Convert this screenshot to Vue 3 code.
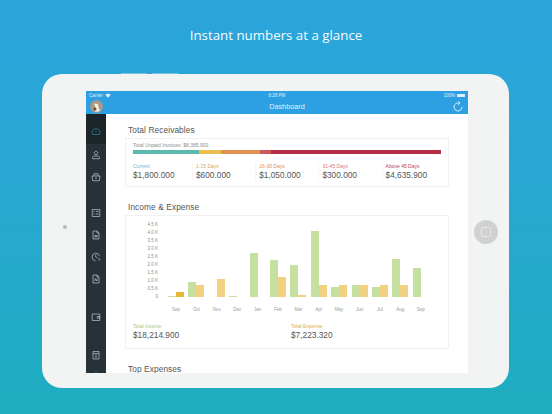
<template>
  <div class="page">
    <h1 class="headline">Instant numbers at a glance</h1>

    <div class="volume-row">
      <span class="volume-btn"></span>
      <span class="volume-btn"></span>
    </div>

    <div class="tablet">
      <div class="bezel-left"><span class="camera"></span></div>

      <div class="screen">
        <header class="appbar">
          <div class="statusbar">
            <span class="status-side">
              Carrier
              <svg width="6" height="5" viewBox="0 0 12 10"><path d="M6 9.5 0.5 3.5C3.5.6 8.5.6 11.500 3.500Z" fill="#fff" /></svg>
            </span>
            <span class="status-time">6:28 PM</span>
            <span class="status-side right">
              100%
              <span class="battery"></span>
            </span>
          </div>
          <div class="navbar">
            <span class="avatar">
              <svg width="13" height="13" viewBox="0 0 13 13">
                <circle cx="6.500" cy="6.500" r="6.500" fill="#a89a84" />
                <path d="M4 3.500 8 4 8.500 7 10 11 5 12 5.500 7.500Z" fill="#f1eee8" />
                <circle cx="5" cy="9" r="1.500" fill="#7a4a3a" />
              </svg>
            </span>
            <span class="nav-title">Dashboard</span>
            <svg class="refresh" width="10" height="11" viewBox="0 0 20 22" fill="none" stroke="#fff" stroke-width="1.800">
              <path d="M12 4.200A8 8 0 1 0 18 12" />
              <path d="M10.500 .8 14 4.200 10.500 7.600" />
            </svg>
          </div>
        </header>

        <div class="body">
          <aside class="sidebar">
            <div v-for="item in navItems" :key="item.id" class="side-item" :class="[item.gap, { active: item.id === 'home' }]">
              <svg width="10" height="10" viewBox="0 0 20 20" fill="none" stroke="currentColor" stroke-width="1.500" stroke-linejoin="round">
                <path v-for="(d, i) in item.paths" :key="i" :d="d" />
              </svg>
            </div>
          </aside>

          <main class="content">
            <h2 class="section-title first">Total Receivables</h2>
            <section class="card receivables">
              <p class="unpaid">Total Unpaid Invoices: $8,385.900</p>
              <div class="aging-bar">
                <span
                  v-for="seg in agingSegments"
                  :key="seg.color"
                  :style="{ width: seg.width + 'px', background: seg.color }"
                ></span>
              </div>
              <div class="aging-row">
                <div v-for="col in agingCols" :key="col.label" class="aging-col">
                  <span class="stat-label" :style="{ color: col.color }">{{ col.label }}</span>
                  <strong class="stat-value">{{ col.value }}</strong>
                </div>
              </div>
            </section>

            <h2 class="section-title second">Income &amp; Expense</h2>
            <section class="card income">
              <div class="chart">
                <div class="y-axis">
                  <span v-for="t in yTicks" :key="t">{{ t }}</span>
                </div>
                <div class="plot">
                  <div class="bars">
                    <div v-for="(m, i) in months" :key="i" class="group">
                      <span class="bar inc" :style="{ height: m.inc + 'px' }"></span>
                      <span class="bar exp" :class="{ strong: i === 0 }" :style="{ height: m.exp + 'px' }"></span>
                    </div>
                  </div>
                  <div class="x-axis">
                    <span v-for="(m, i) in months" :key="i">{{ m.name }}</span>
                  </div>
                </div>
              </div>
              <div class="totals">
                <div class="total">
                  <span class="stat-label income-label">Total Income</span>
                  <strong class="stat-value">$18,214.900</strong>
                </div>
                <div class="total">
                  <span class="stat-label expense-label">Total Expense</span>
                  <strong class="stat-value">$7,223.320</strong>
                </div>
              </div>
            </section>

            <h2 class="section-title last">Top Expenses</h2>
          </main>
        </div>
      </div>

      <div class="bezel-right">
        <span class="home-btn"><span class="home-square"></span></span>
      </div>
    </div>
  </div>
</template>

<script setup>
const navItems = [
  { id: 'home', paths: ['M3 15a8 8 0 1 1 14 0Z', 'M10 7v3'] },
  { id: 'contacts', paths: ['M10 2.500a3.500 3.500 0 1 0 .01 0Z', 'M3 17.500v-2.500c0-2 2-3 4-3h6c2 0 4 1 4 3v2.500Z'] },
  { id: 'items', paths: ['M2 8h16l-1.500 9.500h-13Z', 'M6 8V3.500h8V8', 'M8 12h4'] },
  { id: 'estimates', gap: 'group-start', paths: ['M2.500 3h15v14h-15Z', 'M5.500 7h2', 'M5.500 12h2', 'M10 7h5', 'M10 12h5'] },
  { id: 'invoices', paths: ['M4 2h8l4 4v12H4Z', 'M12 2v4h4', 'M7.500 11h5v3h-5Z'] },
  { id: 'payments', paths: ['M17 8.500A7.500 7.500 0 1 0 9 17.500', 'M9.500 5.500V10l3 2', 'M14 12l3.500 3.500-2 2'] },
  { id: 'notes', paths: ['M4 2h8l4 4v12H4Z', 'M12 2v4h4', 'M8 14V9l4 5V9'] },
  { id: 'wallet', gap: 'group-wide', paths: ['M2.500 4h15v13h-15Z', 'M12.500 9h5v3.500h-5Z'] },
  { id: 'calendar', gap: 'group-wide', paths: ['M4 3h12v15H4Z', 'M4 7h12', 'M8 10.500h4', 'M8 14h4'] },
  { id: 'settings', paths: ['M3 9a7 7 0 0 1 14 0v8H3Z'] }
]

const agingSegments = [
  { width: 66.5, color: '#5fb8ae' },
  { width: 22, color: '#e8c050' },
  { width: 39, color: '#e09050' },
  { width: 10.5, color: '#cf5a5a' },
  { width: 171, color: '#b52d48' }
]

const agingCols = [
  { label: 'Current', value: '$1,800.000', color: '#6db4d8' },
  { label: '1-15 Days', value: '$600.000', color: '#d8a94c' },
  { label: '16-30 Days', value: '$1,050.000', color: '#e0924e' },
  { label: '31-45 Days', value: '$300.000', color: '#e0717a' },
  { label: 'Above 45 Days', value: '$4,635.900', color: '#b8405a' }
]

const yTicks = ['4.5 K', '4.0 K', '3.5 K', '3.0 K', '2.5 K', '2.0 K', '1.5 K', '1.0 K', '0.5 K', '0']

const months = [
  { name: 'Sep', inc: 0.5, exp: 4.7 },
  { name: 'Oct', inc: 15, exp: 11.7 },
  { name: 'Nov', inc: 0, exp: 17.3 },
  { name: 'Dec', inc: 0.5, exp: 0 },
  { name: 'Jan', inc: 43.3, exp: 0 },
  { name: 'Feb', inc: 36.7, exp: 20 },
  { name: 'Mar', inc: 31.7, exp: 1.7 },
  { name: 'Apr', inc: 65.7, exp: 12 },
  { name: 'May', inc: 9.3, exp: 12 },
  { name: 'Jun', inc: 12, exp: 12 },
  { name: 'Jul', inc: 9.3, exp: 12 },
  { name: 'Aug', inc: 38, exp: 12 },
  { name: 'Sep', inc: 28.7, exp: 0 }
]
</script>

<style scoped>
.page {
  width: 552px;
  height: 414px;
  overflow: hidden;
  display: flex;
  flex-direction: column;
  align-items: center;
  background: linear-gradient(180deg, #2ba4dc 0%, #27a8d0 50%, #1eadc0 100%);
  font-family: "Liberation Sans", sans-serif;
}

.headline {
  margin: 26px 0 0;
  height: 19px;
  line-height: 19px;
  font-size: 13.300px;
  font-weight: 400;
  font-family: "Open Sans", "Liberation Sans", sans-serif;
  color: #f4fbff;
}

.volume-row {
  align-self: flex-start;
  display: flex;
  gap: 5px;
  margin: 28px 0 0 121px;
  height: 1px;
}

.volume-btn {
  width: 26px;
  height: 1px;
  background: #7cc3e4;
}

.tablet {
  width: 467px;
  height: 314px;
  flex: none;
  display: flex;
  align-self: flex-start;
  margin-left: 42px;
  border-radius: 20px;
  background: #f2f3f3;
}

.bezel-left {
  width: 44px;
  display: flex;
  align-items: center;
  padding-left: 21px;
  padding-bottom: 8px;
  box-sizing: border-box;
}

.camera {
  width: 4px;
  height: 4px;
  border-radius: 50%;
  background: #b9bcbe;
}

.bezel-right {
  flex: 1;
  display: flex;
  align-items: center;
  padding-left: 6px;
}

.home-btn {
  width: 24px;
  height: 24px;
  border-radius: 50%;
  background: #d0d1d2;
  display: flex;
  align-items: center;
  justify-content: center;
  margin-top: 1px;
}

.home-square {
  width: 8px;
  height: 8px;
  border: 1px solid #e6e6e6;
  border-radius: 2px;
}

.screen {
  width: 382px;
  height: 282px;
  margin-top: 17px;
  overflow: hidden;
  display: flex;
  flex-direction: column;
  background: #fff;
}

.appbar {
  height: 23px;
  flex: none;
  background: #2d9fe3;
  color: #fff;
}

.statusbar {
  height: 8px;
  padding: 0 3px;
  display: flex;
  align-items: center;
  justify-content: space-between;
  font-size: 4.500px;
  opacity: 0.85;
}

.status-side {
  width: 60px;
  display: flex;
  align-items: center;
  gap: 2px;
}

.status-side.right {
  justify-content: flex-end;
}

.battery {
  width: 8px;
  height: 3px;
  background: #fff;
  border-radius: 0.5px;
}

.navbar {
  height: 15px;
  display: grid;
  grid-template-columns: 40px 1fr 20px;
  align-items: center;
  justify-items: center;
}

.avatar {
  width: 13px;
  height: 13px;
  display: flex;
  justify-self: start;
  margin-left: 4px;
}

.nav-title {
  font-size: 7.300px;
  opacity: 0.85;
}

.refresh {
  opacity: 0.95;
}

.body {
  flex: 1;
  min-height: 0;
  display: flex;
}

.sidebar {
  width: 20px;
  flex: none;
  background: #263238;
  color: #b6bec2;
  display: flex;
  flex-direction: column;
}

.side-item {
  height: 22px;
  flex: none;
  display: flex;
  align-items: center;
  justify-content: center;
}

.side-item.active {
  height: 30px;
  padding-top: 6px;
  box-sizing: border-box;
  background: #1c2529;
  color: #2f7fa6;
}

.side-item.group-start {
  margin-top: 14px;
}

.side-item.group-wide {
  margin-top: 16px;
}

.content {
  flex: 1;
  min-width: 0;
  padding: 0 19px;
  overflow: hidden;
}

.section-title {
  margin: 0 3px;
  height: 10px;
  line-height: 10px;
  font-size: 8.300px;
  font-weight: 400;
  letter-spacing: 0.1px;
  color: #555;
}

.section-title.first {
  margin-top: 11px;
  margin-bottom: 3px;
}

.section-title.second {
  margin-top: 15px;
}

.section-title.last {
  margin-top: 15px;
}

.card {
  border: 1px solid #f1f1f1;
  box-sizing: border-box;
}

.receivables {
  height: 49px;
  padding: 3px 7px 0;
}

.unpaid {
  margin: 0;
  height: 7px;
  line-height: 7px;
  font-size: 5px;
  color: #8d8d8d;
}

.aging-bar {
  display: flex;
  height: 3.500px;
  margin-top: 1px;
}

.aging-row {
  display: flex;
  margin-top: 9px;
}

.aging-col {
  width: 63.200px;
  flex: none;
  box-sizing: border-box;
  padding-left: 3px;
  border-left: 1px solid #f6f6f6;
  display: flex;
  flex-direction: column;
}

.aging-col:first-child {
  width: 59px;
  padding-left: 0;
  border-left: 0;
}

.stat-label {
  height: 7px;
  line-height: 7px;
  font-size: 5px;
}

.stat-value {
  margin-top: 0.500px;
  height: 11px;
  line-height: 11px;
  font-size: 8.300px;
  font-weight: 400;
  color: #555;
}

.income {
  height: 134px;
  margin-top: 3px;
  padding: 3.500px 7px 0;
}

.chart {
  display: flex;
}

.y-axis {
  width: 25px;
  flex: none;
  height: 80px;
  margin-top: 1px;
  display: flex;
  flex-direction: column;
  align-items: flex-end;
  justify-content: space-between;
  font-size: 4.500px;
  line-height: 8px;
  color: #8e8e8e;
}

.plot {
  flex: 1;
  padding-left: 10px;
}

.bars {
  display: flex;
  align-items: flex-end;
  gap: 4.400px;
  height: 77px;
}

.group {
  width: 16px;
  flex: none;
  display: flex;
  align-items: flex-end;
}

.bar {
  width: 8px;
  display: block;
}

.bar.inc {
  background: #c6e0a2;
}

.bar.exp {
  background: #f1d283;
}

.bar.exp.strong {
  background: #e9b735;
}

.x-axis {
  display: flex;
  gap: 4.400px;
  margin-top: 10px;
  font-size: 4.500px;
  line-height: 6px;
  color: #9a9a9a;
}

.x-axis span {
  width: 16px;
  flex: none;
  text-align: center;
}

.totals {
  display: flex;
  margin-top: 10px;
}

.total {
  width: 158px;
  flex: none;
  display: flex;
  flex-direction: column;
}

.income-label {
  color: #a9c77a;
}

.expense-label {
  color: #d8ae48;
}
</style>

<style>
html,
body {
  margin: 0;
  background: #26a6cf;
}
</style>
